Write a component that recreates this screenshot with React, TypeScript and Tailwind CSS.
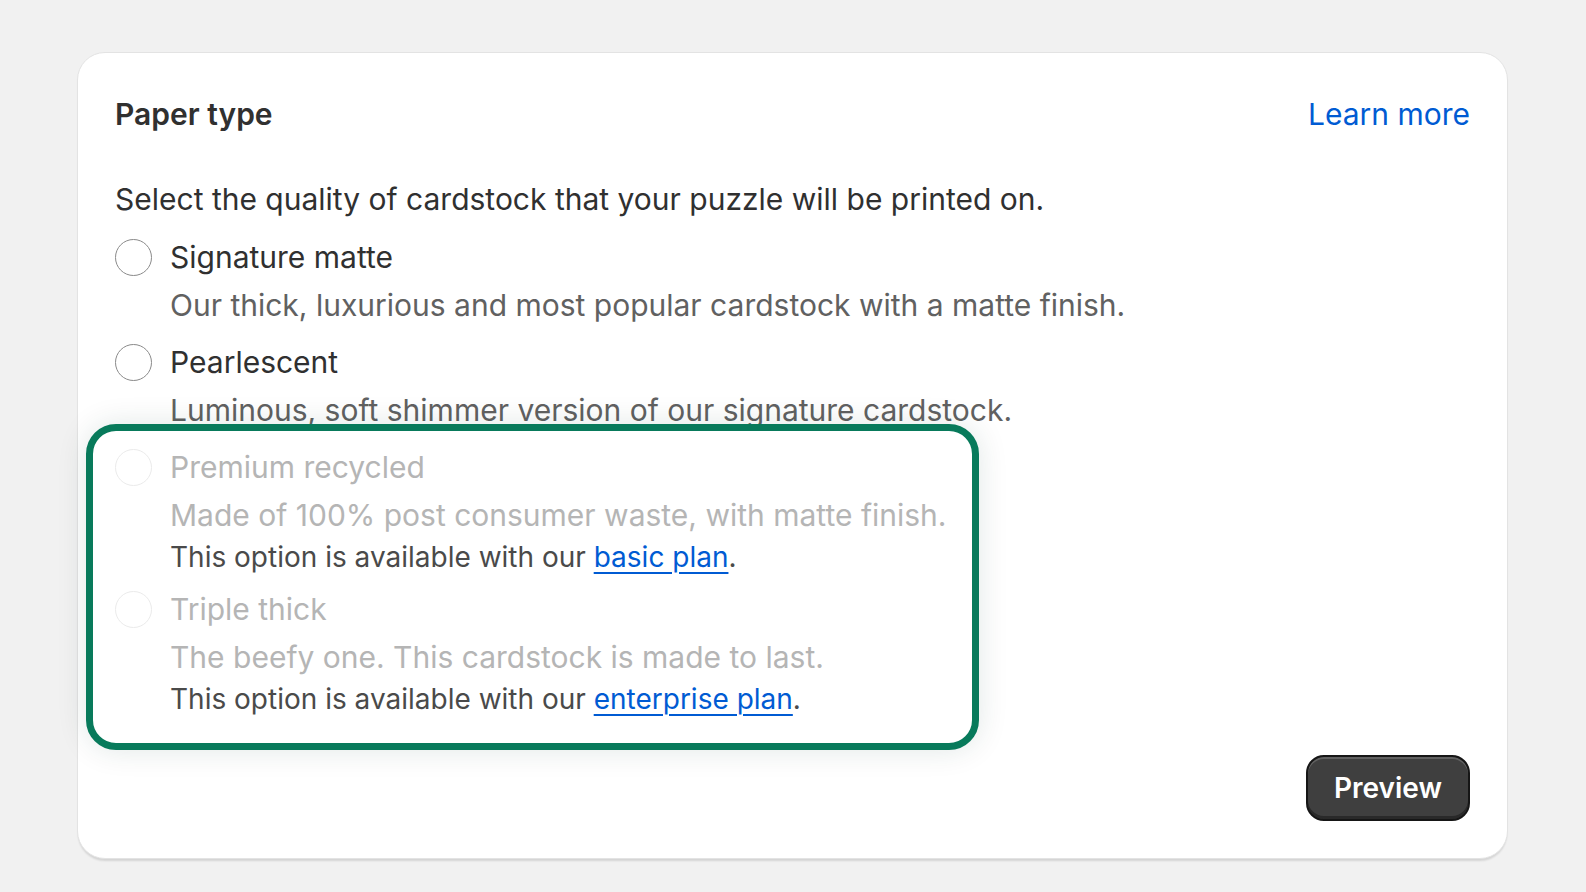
const font = { fontFamily: 'Inter, "Noto Sans", sans-serif' };

function Radio({ disabled }: { disabled?: boolean }) {
  return (
    <span
      className={
        "h-[37px] w-[37px] shrink-0 rounded-full border-[1.5px] bg-white " +
        (disabled ? "border-[#ebebeb]" : "border-[#8a8a8a]")
      }
    />
  );
}

function Choice({
  label,
  help,
  disabled,
  plan,
}: {
  label: string;
  help: string;
  disabled?: boolean;
  plan?: string;
}) {
  return (
    <div>
      <label className="flex h-[42px] items-center gap-[18px]">
        <Radio disabled={disabled} />
        <span className={disabled ? "text-[#b5b5b5]" : "text-[#303030]"}>{label}</span>
      </label>
      <p className={"mt-[6px] pl-[55px] " + (disabled ? "text-[#b5b5b5]" : "text-[#616161]")}>{help}</p>
      {plan && (
        <p className="mt-[1px] pl-[55px] text-[28px] leading-[40px] text-[#4a4a4a]">
          This option is available with our{" "}
          <a href="#" className="text-[#005bd3] underline decoration-[2px] underline-offset-[5px]">
            {plan}
          </a>
          .
        </p>
      )}
    </div>
  );
}

export default function App() {
  return (
    <div className="min-h-screen bg-[#f1f1f1] pl-[77px] pt-[52px]" style={font}>
      <section className="w-[1431px] rounded-[28px] border border-[#e3e3e3] bg-white px-[37px] pb-[37px] pt-[40px] text-[30px] leading-[42px] shadow-[0_3px_2px_-1px_rgba(0,0,0,0.12)]">
        <div className="flex items-center justify-between">
          <h2 className="font-semibold text-[#303030]">Paper type</h2>
          <a href="#" className="text-[#005bd3]">Learn more</a>
        </div>

        <p className="mt-[43px] text-[#303030]">
          Select the quality of cardstock that your puzzle will be printed on.
        </p>

        <div className="mt-[16px]">
          <Choice
            label="Signature matte"
            help="Our thick, luxurious and most popular cardstock with a matte finish."
          />
          <div className="mt-[15px]">
            <Choice label="Pearlescent" help="Luminous, soft shimmer version of our signature cardstock." />
          </div>

          <div className="relative -ml-[29px] -mt-[7px] w-fit rounded-[30px] border-[7px] border-[#087a5b] bg-white pb-[24px] pl-[22px] pr-[26px] pt-[15px] shadow-[0_0_30px_rgba(0,60,50,0.12)]">
            <Choice
              label="Premium recycled"
              help="Made of 100% post consumer waste, with matte finish."
              disabled
              plan="basic plan"
            />
            <div className="mt-[11px]">
              <Choice
                label="Triple thick"
                help="The beefy one. This cardstock is made to last."
                disabled
                plan="enterprise plan"
              />
            </div>
          </div>
        </div>

        <div className="mt-[5px] flex justify-end">
          <button className="h-[66px] w-[164px] rounded-[18px] border-2 border-[#161616] bg-[#3f3f3f] text-[28px] font-semibold text-white shadow-[inset_0_2px_0_rgba(255,255,255,0.18),inset_0_-3px_0_rgba(0,0,0,0.35)]">
            Preview
          </button>
        </div>
      </section>
    </div>
  );
}
